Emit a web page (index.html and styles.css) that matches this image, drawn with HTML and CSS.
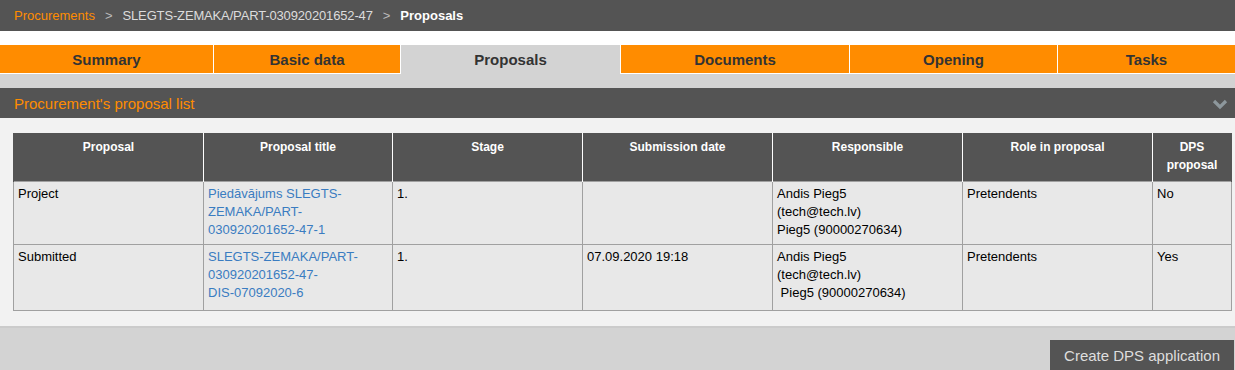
FILE: index.html
```html
<!DOCTYPE html>
<html lang="en">
<head>
    <meta charset="UTF-8">
    <title>Proposals</title>
    <link rel="stylesheet" href="styles.css">
</head>
<body>

    <div class="breadcrumbs">
        <a href="#" class="crumb-link">Procurements</a>
        <span class="crumb-sep">&gt;</span>
        <span class="crumb">SLEGTS-ZEMAKA/PART-030920201652-47</span>
        <span class="crumb-sep">&gt;</span>
        <span class="crumb-current">Proposals</span>
    </div>

    <div class="tabs">
        <a href="#" class="tab tab-summary">Summary</a>
        <a href="#" class="tab tab-basic">Basic data</a>
        <a href="#" class="tab tab-proposals active">Proposals</a>
        <a href="#" class="tab tab-documents">Documents</a>
        <a href="#" class="tab tab-opening">Opening</a>
        <a href="#" class="tab tab-tasks">Tasks</a>
    </div>
    <div class="tabs-strip"></div>

    <div class="section-head">
        <span>Procurement's proposal list</span>
        <svg class="chevron" width="16" height="12" viewBox="0 0 16 12">
            <polyline points="2,3 8,9 14,3" fill="none" stroke="#8d979c" stroke-width="3.2"/>
        </svg>
    </div>

    <div class="section-body">
        <table class="proposals">
            <thead>
                <tr>
                    <th class="c1">Proposal</th>
                    <th class="c2">Proposal title</th>
                    <th class="c3">Stage</th>
                    <th class="c4">Submission date</th>
                    <th class="c5">Responsible</th>
                    <th class="c6">Role in proposal</th>
                    <th class="c7">DPS proposal</th>
                </tr>
            </thead>
            <tbody>
                <tr class="row-first">
                    <td>Project</td>
                    <td><a href="#">Piedāvājums SLEGTS-ZEMAKA/PART-030920201652-47-1</a></td>
                    <td>1.</td>
                    <td></td>
                    <td>Andis Pieg5<br>(tech@tech.lv)<br>Pieg5 (90000270634)</td>
                    <td>Pretendents</td>
                    <td>No</td>
                </tr>
                <tr class="row-second">
                    <td>Submitted</td>
                    <td><a href="#">SLEGTS-ZEMAKA/PART-030920201652-47-<span class="nowrap">DIS-07092020-6</span></a></td>
                    <td>1.</td>
                    <td>07.09.2020 19:18</td>
                    <td>Andis Pieg5<br>(tech@tech.lv)<br>&nbsp;Pieg5 (90000270634)</td>
                    <td>Pretendents</td>
                    <td>Yes</td>
                </tr>
            </tbody>
        </table>
    </div>

    <div class="footer">
        <button type="button">Create DPS application</button>
    </div>

</body>
</html>
```

FILE: styles.css
```css
body {
    font-family: "Liberation Sans", Arial, sans-serif;
    margin: 0;
    padding: 0;
    background-color: #fff;
    color: #000;
}

a {
    text-decoration: none;
}

.breadcrumbs {
    background-color: #545454;
    height: 31px;
    padding-left: 14px;
    display: flex;
    align-items: center;
    font-size: 13px;
    color: #dcdcdc;
}

.crumb-link {
    color: #ff8c00;
}

.crumb-sep {
    color: #bbb;
    margin: 0 10px;
}

.crumb {
    letter-spacing: -0.15px;
}

.crumb-current {
    color: #fff;
    font-weight: bold;
}

.tabs {
    display: flex;
    margin-top: 14px;
}

.tab {
    display: flex;
    justify-content: center;
    align-items: center;
    box-sizing: border-box;
    height: 29px;
    background-color: #ff8c00;
    border-right: 1px solid #fff;
    border-bottom: 1px solid #fff;
    color: #333;
    font-size: 15px;
    font-weight: bold;
}

.tab-summary { width: 214px; }
.tab-basic { width: 187px; }
.tab-proposals { width: 219px; }
.tab-documents { width: 230px; border-left: 1px solid #fff; }
.tab-opening { width: 208px; }
.tab-tasks { width: 177px; border-right: none; }

.tab.active {
    background-color: #d3d3d3;
    border: none;
}

.tabs-strip {
    background-color: #d3d3d3;
    height: 14px;
}

.section-head {
    background-color: #545454;
    height: 30px;
    padding: 0 7px 0 14px;
    display: flex;
    justify-content: space-between;
    align-items: center;
    color: #ff8c00;
    font-size: 15px;
}

.chevron {
    margin-top: 1px;
}

.section-body {
    background-color: #f2f2f2;
    padding: 15px 4px 15px 13px;
    border-bottom: 2px solid #cbcbcb;
}

.proposals {
    border-collapse: collapse;
    width: 1218px;
    table-layout: fixed;
    font-size: 13px;
}

.proposals th {
    background-color: #545454;
    color: #fff;
    font-size: 12px;
    font-weight: bold;
    line-height: 18px;
    height: 48px;
    box-sizing: border-box;
    padding: 5px 4px 7px;
    vertical-align: top;
    text-align: center;
    border-left: 1px solid #fff;
    border-right: 1px solid #fff;
}

.proposals th:first-child {
    border-left: 1px solid #545454;
}

.proposals th:last-child {
    border-right: 1px solid #545454;
}

.c1 { width: 190px; }
.c2 { width: 189px; }
.c3 { width: 190px; }
.c4 { width: 190px; }
.c5 { width: 190px; }
.c6 { width: 190px; }
.c7 { width: 79px; }

.proposals td {
    background-color: #e8e8e8;
    border: 1px solid #a0a0a0;
    padding: 3px 4px 5px;
    line-height: 18px;
    vertical-align: top;
}

.row-first td {
    height: 54px;
}

.row-second td {
    height: 57px;
}

.proposals td a {
    color: #3a7cc1;
}

.nowrap {
    white-space: nowrap;
}

.footer {
    background-color: #d3d3d3;
    height: 43px;
    display: flex;
    justify-content: flex-end;
    align-items: flex-start;
    padding-top: 12px;
    padding-right: 1px;
    box-sizing: border-box;
    overflow: hidden;
}

.footer button {
    background-color: #545454;
    color: #dedede;
    border: none;
    font-family: "Liberation Sans", Arial, sans-serif;
    font-size: 15px;
    height: 34px;
    padding: 0 14px 3px 14px;
    cursor: pointer;
}
```
